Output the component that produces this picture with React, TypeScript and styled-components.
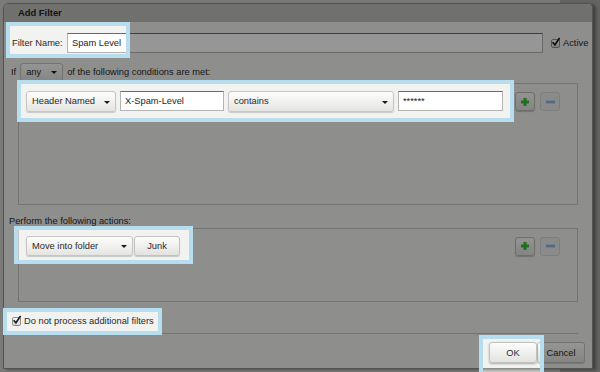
import React from 'react';
import styled, { createGlobalStyle } from 'styled-components';

const GlobalStyle = createGlobalStyle`
  html, body {
    margin: 0;
    padding: 0;
  }
  body {
    font-family: 'Liberation Sans', Arial, sans-serif;
    font-size: 9.3px;
    color: #2a2a2a;
    background: #c8c8c5;
  }
`;

type Spot = { x: number; y: number; w: number; h: number };

// tutorial spotlight holes over the dimmed dialog
const spots: Spot[] = [
  { x: 6, y: 22, w: 124, h: 36 },
  { x: 17, y: 80, w: 497, h: 42 },
  { x: 14, y: 226, w: 179, h: 38 },
  { x: 3, y: 308, w: 159, h: 27 },
  { x: 479, y: 335, w: 65, h: 42 },
];

const holes = spots.map(s => `M${s.x} ${s.y}h${s.w}v${s.h}h${-s.w}Z`).join('');
const dimClip = `path(evenodd, "M0 0H600V372H0Z${holes}")`;

export default function App() {
  return (
    <Page>
      <GlobalStyle />
      <Dialog>
        <TitleBar>Add Filter</TitleBar>

        <NameRow>
          <Label>Filter Name:</Label>
          <TextInput $w={476} defaultValue="Spam Level" readOnly />
          <CheckLabel $ml={8}>
            <CheckBox />
            Active
          </CheckLabel>
        </NameRow>

        <IfRow>
          <span>If</span>
          <Select $w={43} $h={18}>any</Select>
          <span>of the following conditions are met:</span>
        </IfRow>

        <RuleBox $h={122} $mt={2}>
          <RuleRow>
            <Select $w={90} $h={21}>Header Named</Select>
            <TextInput $w={104} defaultValue="X-Spam-Level" readOnly />
            <Select $w={166} $h={21}>contains</Select>
            <TextInput $w={105} defaultValue="******" readOnly />
            <ToolGroup>
              <IconButton><PlusIcon /></IconButton>
              <IconButton disabled><MinusIcon /></IconButton>
            </ToolGroup>
          </RuleRow>
        </RuleBox>

        <SectionLabel>Perform the following actions:</SectionLabel>

        <RuleBox $h={74} $mt={1}>
          <ActionRow>
            <Select $w={107} $h={20}>Move into folder</Select>
            <Button $w={46} $h={20}>Junk</Button>
            <ToolGroup>
              <IconButton><PlusIcon /></IconButton>
              <IconButton disabled><MinusIcon /></IconButton>
            </ToolGroup>
          </ActionRow>
        </RuleBox>

        <StopRow>
          <CheckLabel>
            <CheckBox />
            Do not process additional filters
          </CheckLabel>
        </StopRow>

        <Divider />
        <ButtonBar>
          <Button $w={48} $h={21} $raised>OK</Button>
          <Button $w={48} $h={21}>Cancel</Button>
        </ButtonBar>
      </Dialog>

      <Dimmer style={{ clipPath: dimClip }} />
      {spots.map((s, i) => (
        <SpotFrame key={i} style={{ left: s.x, top: s.y, width: s.w, height: s.h }} />
      ))}
    </Page>
  );
}

const CheckBox = () => (
  <Box>
    <svg width="10" height="10" viewBox="0 0 10 10">
      <path d="M1.6 5.2 L3.9 7.8 L8.6 0.9" fill="none" stroke="#1e1e1e" strokeWidth="1.7" />
    </svg>
  </Box>
);

const PlusIcon = () => (
  <svg width="10" height="10" viewBox="0 0 10 10">
    <path d="M5 1 V9 M1 5 H9" stroke="#3bbd3b" strokeWidth="3" />
  </svg>
);

const MinusIcon = () => (
  <svg width="11" height="10" viewBox="0 0 11 10">
    <rect x="1" y="3.6" width="9" height="2.8" fill="#8fb2e6" />
  </svg>
);

const Page = styled.div`
  position: relative;
  width: 600px;
  height: 372px;
  overflow: hidden;
  padding: 3px 0 0 3px;
  box-sizing: border-box;
  background: linear-gradient(to right, #cfcfcc 0 560px, #a9a9a7 560px);
`;

const Dialog = styled.div`
  width: 590px;
  height: 366px;
  box-sizing: border-box;
  border: 1px solid #8e8e8b;
  border-radius: 5px 5px 0 0;
  background: #f2f2f0;
  box-shadow: 3px 1px 3px rgba(0, 0, 0, 0.35);
  display: flex;
  flex-direction: column;
`;

const TitleBar = styled.div`
  height: 18px;
  line-height: 18px;
  padding-left: 14px;
  font-weight: bold;
  font-size: 9.4px;
  color: #1e1e1e;
  background: #bfc0bb;
  border-radius: 4px 4px 0 0;
`;

const NameRow = styled.div`
  display: flex;
  align-items: center;
  height: 20px;
  margin-top: 11px;
  padding-left: 8px;
`;

const Label = styled.span`
  width: 55px;
  white-space: nowrap;
`;

const TextInput = styled.input<{ $w: number }>`
  width: ${p => p.$w}px;
  height: 20px;
  box-sizing: border-box;
  padding: 0 4px;
  border: 1px solid #b4b4b1;
  border-top-color: #6a6a67;
  background: #fff;
  font: inherit;
  color: #1e1e1e;
  outline: none;
`;

const CheckLabel = styled.label<{ $ml?: number }>`
  display: flex;
  align-items: center;
  gap: 3px;
  margin-left: ${p => p.$ml ?? 0}px;
  white-space: nowrap;
`;

const Box = styled.span`
  position: relative;
  width: 9px;
  height: 9px;
  box-sizing: border-box;
  border: 1px solid #8d8d8a;
  border-radius: 2px;
  background: linear-gradient(#fdfdfd, #dcdcda);

  svg {
    position: absolute;
    left: -1px;
    top: -3px;
  }
`;

const IfRow = styled.div`
  display: flex;
  align-items: center;
  gap: 4px;
  height: 18px;
  margin-top: 10px;
  padding-left: 7px;
`;

const Select = styled.div<{ $w: number; $h: number }>`
  position: relative;
  width: ${p => p.$w}px;
  height: ${p => p.$h}px;
  line-height: ${p => p.$h - 2}px;
  box-sizing: border-box;
  padding-left: 5px;
  border: 1px solid #c6c6c3;
  border-radius: 3px;
  background: linear-gradient(#fdfdfc, #e4e4e2);
  box-shadow: 0 1px 1px rgba(0, 0, 0, 0.18);
  white-space: nowrap;

  &::after {
    content: '';
    position: absolute;
    right: 5px;
    top: 50%;
    margin-top: -1px;
    border-left: 3px solid transparent;
    border-right: 3px solid transparent;
    border-top: 3px solid #1a1a1a;
  }
`;

const RuleBox = styled.div<{ $h: number; $mt: number }>`
  height: ${p => p.$h}px;
  margin: ${p => p.$mt}px 14px 0;
  padding: 7px 17px 0 7px;
  box-sizing: border-box;
  border: 1px solid #c4c4c0;
`;

const RuleRow = styled.div`
  display: flex;
  align-items: flex-start;
  gap: 4px;
`;

const ActionRow = styled.div`
  display: flex;
  align-items: center;
  gap: 1px;
`;

const ToolGroup = styled.div`
  display: flex;
  gap: 5px;
  margin-left: auto;
  align-self: center;
`;

const IconButton = styled.button`
  width: 20px;
  height: 19px;
  padding: 0;
  display: flex;
  align-items: center;
  justify-content: center;
  border: 1px solid #bcbcb9;
  border-radius: 3px;
  background: linear-gradient(#fafaf9, #e0e0de);
  box-shadow: 0 1px 1px rgba(0, 0, 0, 0.2);

  &:disabled {
    border-color: #d6d6d3;
    background: #ebebea;
    box-shadow: none;
  }
`;

const SectionLabel = styled.div`
  margin: 10px 0 0 5px;
  line-height: 12px;
`;

const Button = styled.button<{ $w: number; $h: number; $raised?: boolean }>`
  width: ${p => p.$w}px;
  height: ${p => p.$h}px;
  padding: 0;
  border: 1px solid #c2c2bf;
  border-radius: 3px;
  background: linear-gradient(#fdfdfc, #e2e2e0);
  box-shadow: ${p => (p.$raised ? '0 1px 2px rgba(0, 0, 0, 0.3)' : '0 1px 1px rgba(0, 0, 0, 0.18)')};
  font: inherit;
  color: #2a2a2a;
  position: relative;
  z-index: ${p => (p.$raised ? 1 : 0)};
`;

const StopRow = styled.div`
  display: flex;
  align-items: center;
  height: 14px;
  margin-top: 12px;
  padding-left: 8px;
`;

const Divider = styled.div`
  height: 1px;
  margin: 5px 14px 0;
  background: #c4c4c0;
`;

const ButtonBar = styled.div`
  display: flex;
  justify-content: flex-end;
  padding: 8px 7px 0 0;
`;

const Dimmer = styled.div`
  position: absolute;
  inset: 0;
  background: rgba(0, 0, 0, 0.41);
  z-index: 5;
  pointer-events: none;
`;

const SpotFrame = styled.div`
  position: absolute;
  box-sizing: border-box;
  border: 4px solid #b6deee;
  z-index: 6;
  pointer-events: none;
`;
